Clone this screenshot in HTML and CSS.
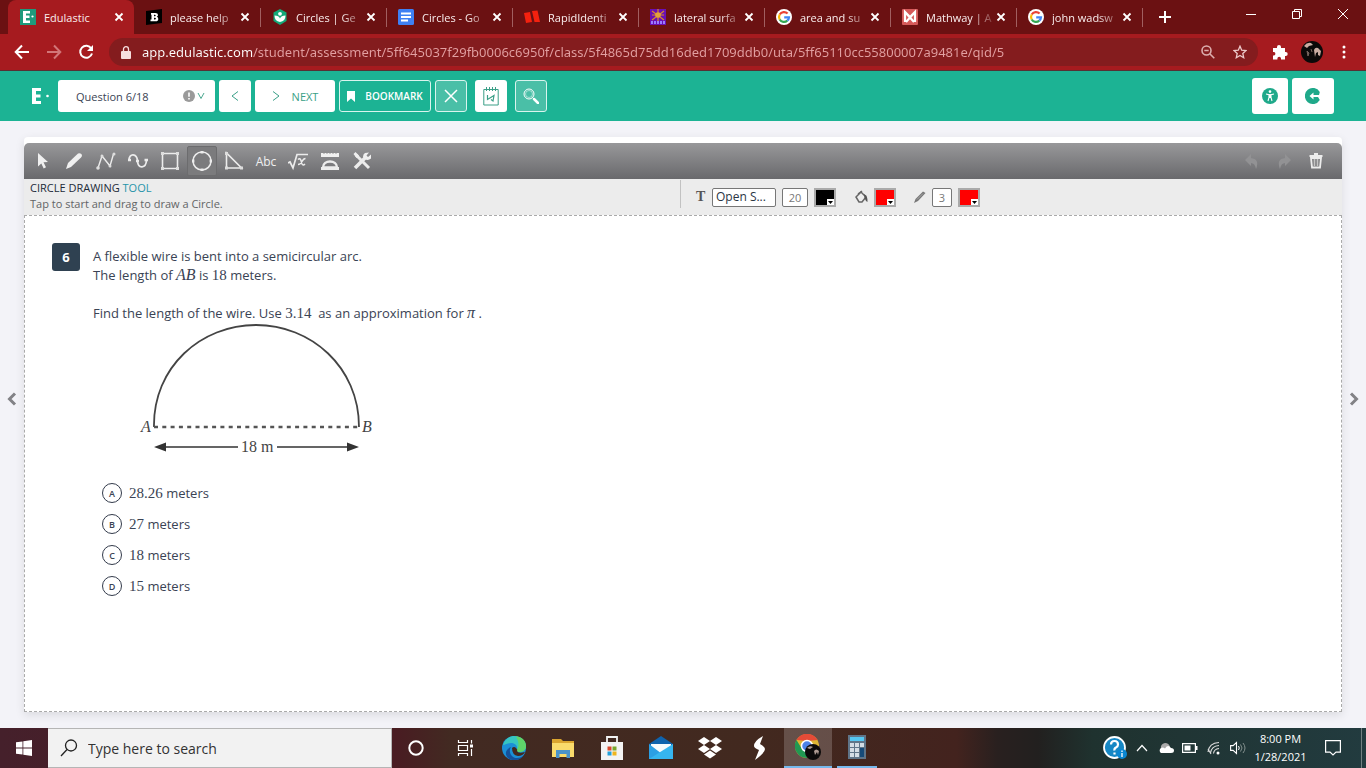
FILE: index.html
```html
<!DOCTYPE html>
<html lang="en">
<head>
<meta charset="utf-8">
<title>Edulastic</title>
<link rel="stylesheet" href="styles.css">
</head>
<body>
<div class="tabs">
  <div class="tab tab-active">
    <svg class="fav" viewBox="0 0 16 16"><rect width="16" height="16" fill="#1e9a7c"/><path d="M3 2h7v2.600H6v2h3.500v2.500H6v2.300h4V14H3z" fill="#fff"/><circle cx="12.500" cy="7.500" r="1.100" fill="#fff"/></svg>
    <a href="#" class="tab-title">Edulastic</a><button class="tab-close" aria-label="Close tab"><svg viewBox="0 0 10 10"><path d="M1.500 1.500l7 7m0-7l-7 7"/></svg></button>
  </div>
  <div class="tab">
    <svg class="fav" viewBox="0 0 16 16"><path d="M0 2L16 0v14L0 16z" fill="#000"/><path d="M5 4h4.500q2.500 0 2.500 2 0 1.300-1.200 1.800 1.500.5 1.500 2.100 0 2.300-2.800 2.300H4.500V10.500h1V5.800H5zM8 5.700v1.500h.9q.8 0 .8-.7t-.8-.8zm0 3v1.800h1q.9 0 .9-.9T9 8.700z" fill="#fff"/></svg>
    <a href="#" class="tab-title">please help</a><button class="tab-close" aria-label="Close tab"><svg viewBox="0 0 10 10"><path d="M1.500 1.500l7 7m0-7l-7 7"/></svg></button>
  </div>
  <div class="tab">
    <svg class="fav" viewBox="0 0 16 16"><path d="M8 0l6.500 3.600v8.300L8 16l-6.500-4.100V3.600z" fill="#14a878"/><circle cx="8" cy="4.800" r="1.900" fill="#fff"/><path d="M2.500 6.500Q7 6.500 8 9.500q1-3 5.500-3Q13.500 12 8 13 2.500 12 2.500 6.500z" fill="#fff"/></svg>
    <a href="#" class="tab-title">Circles | Ge</a><button class="tab-close" aria-label="Close tab"><svg viewBox="0 0 10 10"><path d="M1.500 1.500l7 7m0-7l-7 7"/></svg></button>
  </div>
  <div class="tab">
    <svg class="fav" viewBox="0 0 16 16"><rect width="16" height="16" rx="1.500" fill="#3f80f3"/><path d="M3 4.500h10M3 8h10M3 11.500h7" stroke="#fff" stroke-width="1.800"/></svg>
    <a href="#" class="tab-title">Circles - Go</a><button class="tab-close" aria-label="Close tab"><svg viewBox="0 0 10 10"><path d="M1.500 1.500l7 7m0-7l-7 7"/></svg></button>
  </div>
  <div class="tab">
    <svg class="fav" viewBox="0 0 16 16"><path d="M0 4l6-1 2 10-6 1zM8 2l5.500-.5L16 13h-5.500z" fill="#f4210f"/></svg>
    <a href="#" class="tab-title">RapidIdenti</a><button class="tab-close" aria-label="Close tab"><svg viewBox="0 0 10 10"><path d="M1.500 1.500l7 7m0-7l-7 7"/></svg></button>
  </div>
  <div class="tab">
    <svg class="fav" viewBox="0 0 16 16"><rect width="16" height="16" fill="#6a10b4"/><path d="M8 0v12M2 2l12 9M14 2L2 11M2 6h12" stroke="#d98a2b" stroke-width="1.200"/><circle cx="8" cy="6" r="2.800" fill="#e3a338"/><path d="M1 13.500h14" stroke="#9a7cff" stroke-width="3" stroke-dasharray="2 1"/></svg>
    <a href="#" class="tab-title">lateral surfa</a><button class="tab-close" aria-label="Close tab"><svg viewBox="0 0 10 10"><path d="M1.500 1.500l7 7m0-7l-7 7"/></svg></button>
  </div>
  <div class="tab">
    <svg class="fav" viewBox="0 0 16 16"><circle cx="8" cy="8" r="8" fill="#fff"/><g fill="none" stroke-width="2.200"><path d="M11.600 4.600A5 5 0 0 0 3.700 5.500" stroke="#ea4335"/><path d="M3.700 5.500a5 5 0 0 0 0 5" stroke="#fbbc05"/><path d="M3.700 10.500a5 5 0 0 0 7.600 1.200" stroke="#34a853"/><path d="M11.300 11.700A5 5 0 0 0 13 8.300H8.200" stroke="#4285f4"/></g></svg>
    <a href="#" class="tab-title">area and su</a><button class="tab-close" aria-label="Close tab"><svg viewBox="0 0 10 10"><path d="M1.500 1.500l7 7m0-7l-7 7"/></svg></button>
  </div>
  <div class="tab">
    <svg class="fav" viewBox="0 0 16 16"><rect width="16" height="16" rx="1" fill="#d65a5a"/><path d="M3 13V3l5 5 5-5v10M3 3l9 10M13 3L4 13" fill="none" stroke="#fff" stroke-width="2.200"/></svg>
    <a href="#" class="tab-title">Mathway | A</a><button class="tab-close" aria-label="Close tab"><svg viewBox="0 0 10 10"><path d="M1.500 1.500l7 7m0-7l-7 7"/></svg></button>
  </div>
  <div class="tab">
    <svg class="fav" viewBox="0 0 16 16"><circle cx="8" cy="8" r="8" fill="#fff"/><g fill="none" stroke-width="2.200"><path d="M11.600 4.600A5 5 0 0 0 3.700 5.500" stroke="#ea4335"/><path d="M3.700 5.500a5 5 0 0 0 0 5" stroke="#fbbc05"/><path d="M3.700 10.500a5 5 0 0 0 7.600 1.200" stroke="#34a853"/><path d="M11.300 11.700A5 5 0 0 0 13 8.300H8.200" stroke="#4285f4"/></g></svg>
    <a href="#" class="tab-title">john wadsw</a><button class="tab-close" aria-label="Close tab"><svg viewBox="0 0 10 10"><path d="M1.500 1.500l7 7m0-7l-7 7"/></svg></button>
  </div>
  <button class="new-tab" aria-label="New tab"><svg width="12" height="12" viewBox="0 0 12 12"><path d="M6 0v12M0 6h12" stroke="#fff" stroke-width="2"/></svg></button>
  <div class="win-controls">
    <button aria-label="Minimize"><svg width="10" height="10" viewBox="0 0 10 10"><path d="M0 5.500h10"/></svg></button>
    <button aria-label="Restore"><svg width="10" height="10" viewBox="0 0 10 10"><path d="M.5 2.500h7v7h-7zM2.500 2.500v-2h7v7h-2"/></svg></button>
    <button aria-label="Close"><svg width="10" height="10" viewBox="0 0 10 10"><path d="M0 0l10 10M10 0L0 10"/></svg></button>
  </div>
</div>

<div class="browser-bar">
  <button class="nav-btn" aria-label="Back"><svg width="16" height="16" viewBox="0 0 16 16"><path d="M15 8H2m6-6.500L1.700 8 8 14.500"/></svg></button>
  <button class="nav-btn nav-dim" aria-label="Forward"><svg width="16" height="16" viewBox="0 0 16 16"><path d="M1 8h13M8 1.500L14.300 8 8 14.500"/></svg></button>
  <button class="nav-btn" aria-label="Reload"><svg width="16" height="16" viewBox="0 0 16 16"><path d="M13.300 4.500A6 6 0 1 0 14 9.500"/><path d="M15 1v6H9z" fill="#fff" stroke="none"/></svg></button>
  <div class="address">
    <svg width="10" height="13" viewBox="0 0 10 13"><rect y="5" width="10" height="8" rx="1" fill="#f7dede"/><path d="M2.500 5V3.200a2.500 2.500 0 0 1 5 0V5" fill="none" stroke="#f7dede" stroke-width="1.300"/></svg>
    <input class="url" type="text" aria-label="Address" value="app.edulastic.com/student/assessment/5ff645037f29fb0006c6950f/class/5f4865d75dd16ded1709ddb0/uta/5ff65110cc55800007a9481e/qid/5">
    <button aria-label="Zoom"><svg width="14" height="14" viewBox="0 0 14 14" fill="none" stroke="#dcaeae" stroke-width="1.600"><circle cx="5.500" cy="5.500" r="4.500"/><path d="M9 9l4.300 4.300M3.300 5.500h4.400"/></svg></button>
    <button aria-label="Bookmark this tab"><svg width="14" height="14" viewBox="0 0 14 14"><path d="M7 1.200l1.700 4 4.300.4-3.200 2.900.9 4.200L7 10.500l-3.700 2.200.9-4.200L1 5.600l4.300-.4z" fill="none" stroke="#edcaca" stroke-width="1.300"/></svg></button>
  </div>
  <button class="nav-btn" aria-label="Extensions"><svg width="16" height="16" viewBox="0 0 16 16"><path d="M1 4h4V3a2 2 0 0 1 4 0v1h4v4h.7a2 2 0 0 1 0 4H13v3.500H9v-1a1.800 1.800 0 0 0-3.600 0v1H1v-4h1a1.800 1.800 0 0 0 0-3.500H1z" fill="#fff" stroke="none"/></svg></button>
  <button class="nav-btn" aria-label="Profile"><svg width="22" height="22" viewBox="0 0 22 22"><circle cx="11" cy="11" r="11" fill="#0b0909" stroke="none"/><path d="M3 5q3-4 7-3l2 2-4 1-2 2zM13 9q1-3 4-2l3 3-1 5-2-1v-3l-2 1-1 4z" fill="#c9aca2" stroke="none"/><path d="M6 10l2 2-1 3zM10 8l1 3" fill="#75635d" stroke="#75635d" stroke-width="1"/></svg></button>
  <button class="nav-btn" aria-label="Menu"><svg width="4" height="14" viewBox="0 0 4 14"><g fill="#fff" stroke="none"><circle cx="2" cy="2" r="1.500"/><circle cx="2" cy="7" r="1.500"/><circle cx="2" cy="12" r="1.500"/></g></svg></button>
</div>

<header class="app-header">
  <svg class="logo" width="18" height="18" viewBox="0 0 18 18" role="img" aria-label="Edulastic"><path d="M0 1h9v3H4v3.500h4.500v3H4V14h5v3H0z" fill="#fff"/><circle cx="15.500" cy="9" r="1.300" fill="#fff"/></svg>
  <div class="q-picker">
    <select aria-label="Question"><option>Question 6/18</option></select>
    <svg width="24" height="12" viewBox="0 0 24 12"><circle cx="6" cy="6" r="6" fill="#9a9a9a"/><path d="M6 2.500v4.200M6 8v1.600" stroke="#fff" stroke-width="1.600"/><path d="M15 3l3 5.500L21 3" fill="none" stroke="#4aa78f"/></svg>
  </div>
  <button class="hbtn" aria-label="Previous"><svg width="8" height="10" viewBox="0 0 8 10"><path d="M7 .5L1 5l6 4.500"/></svg></button>
  <button class="hbtn hbtn-next"><svg width="8" height="10" viewBox="0 0 8 10"><path d="M1 .5L7 5 1 9.500"/></svg>NEXT</button>
  <button class="hbtn hbtn-outline hbtn-mark"><svg width="8" height="11" viewBox="0 0 8 11"><path d="M0 0h8v11L4 7.500 0 11z" fill="#fff" stroke="none"/></svg>BOOKMARK</button>
  <button class="hbtn hbtn-outline hbtn-light" aria-label="Cross out"><svg width="14" height="14" viewBox="0 0 14 14"><path d="M1 1l12 12M13 1L1 13" stroke-width="1.500"/></svg></button>
  <div class="hgroup">
    <button class="hbtn" aria-label="Scratchpad"><svg width="16" height="20" viewBox="0 0 16 20"><path d="M.8 3.500h14.400v15.500H.8zM3.500 1v4M6.500 1v4M9.500 1v4M12.500 1v4"/><path d="M4.500 9v4.500L11 9.500 10 15l-2-1.500" stroke-width="1.200"/></svg></button>
    <button class="hbtn hbtn-outline hbtn-light" aria-label="Magnify"><svg width="16" height="16" viewBox="0 0 16 16"><circle cx="6" cy="6" r="5"/><circle cx="6" cy="6" r="3.500" stroke-width=".5"/><path d="M9.500 9.500l1.500 1.500" /><path d="M11 11l4 4" stroke-width="2.500" stroke-linecap="round"/></svg></button>
  </div>
  <div class="hright">
    <button class="hbtn hbtn-big" aria-label="Accessibility"><svg width="16" height="16" viewBox="0 0 16 16"><circle cx="8" cy="8" r="8" fill="#1fa98a" stroke="none"/><circle cx="8" cy="3.600" r="1.300" fill="#fff" stroke="none"/><path d="M4 6l3 .7v2.800L6 13M12 6l-3 .7v2.800l1 3.500M8 6v4" stroke="#fff" stroke-width="1.100"/></svg></button>
    <button class="hbtn hbtn-big hbtn-wide" aria-label="Exit"><svg width="16" height="16" viewBox="0 0 16 16"><path d="M14.800 4A8 8 0 1 0 14.800 12L13 9H8.500v2.500L4.500 8l4-3.500V7H14z" fill="#1fa98a" stroke="none"/></svg></button>
  </div>
</header>

<main class="stage">
  <button class="side" aria-label="Previous question"><svg width="10" height="14" viewBox="0 0 10 14"><path d="M8 1.500L2.500 7 8 12.500"/></svg></button>
  <section class="card">
    <div class="tools">
      <button aria-label="Select"><svg viewBox="0 0 20 20"><path d="M6 2l10 9-4.500.3 2.500 5-2.300 1.200-2.400-5L6 15.500z" fill="#f0f0f0" stroke="none"/></svg></button>
      <button aria-label="Pencil"><svg viewBox="0 0 20 20"><path d="M2 18l2-6L14 2.500q3-1 4 1.500 0 1.500-1 2.500L7 16z" fill="#f0f0f0" stroke="none"/></svg></button>
      <button aria-label="Broken line"><svg viewBox="0 0 20 20"><path d="M2 17L6 5l8 10 3.500-12" stroke-width="1.400"/><g fill="#ddd" stroke="none"><circle cx="2" cy="17" r="1.800"/><circle cx="6" cy="5" r="1.500"/><circle cx="14" cy="15" r="1.500"/><circle cx="18" cy="3" r="1.500"/></g></svg></button>
      <button aria-label="Curve"><svg viewBox="0 0 20 20"><path d="M1 9c0-7 8-7 8.500 1s8.500 8 9-1" stroke-width="1.700"/><path d="M0 9h3M16.500 9h3.500M8 10h3" stroke-width="2.500"/></svg></button>
      <button aria-label="Rectangle"><svg viewBox="0 0 20 20"><path d="M2.500 2.500h15v15h-15z" stroke-width="1.600"/><path d="M1 1h3v3H1zM16 1h3v3h-3zM1 16h3v3H1zM16 16h3v3h-3z" fill="#ddd" stroke="none"/></svg></button>
      <button class="tool-on" aria-label="Circle"><svg viewBox="0 0 20 20"><circle cx="10" cy="10" r="9" stroke-width="1.500"/><path d="M8.500 1.200h3M8.500 18.800h3M1.200 8.500v3M18.800 8.500v3" stroke-width="2.400"/></svg></button>
      <button aria-label="Triangle"><svg viewBox="0 0 20 20"><path d="M2.500 2v15h15z" stroke-width="1.600"/><path d="M1 1h3v3H1zM1 15.500h3v3H1zM16 15.500h3v3h-3z" fill="#ddd" stroke="none"/></svg></button>
      <button class="tool-text">Abc</button>
      <button aria-label="Formula"><svg viewBox="0 0 20 20"><path d="M0 12l2-1 3 6L9 3.500h11" stroke-width="1.700"/><path d="M10 8.500q2-2 3 1l1 3.500q1 2 3 0M17.500 7.500q-2 0-3.500 3t-4 3" stroke-width="1.500"/></svg></button>
      <button aria-label="Measure"><svg viewBox="0 0 20 20"><path d="M1 2h18v4H1z" fill="#f0f0f0" stroke="none"/><path d="M3 16.500c0-8 14-8 14 0z" stroke-width="2.400"/><path d="M1 17.500h18" stroke-width="3"/><path d="M4 2v1m3-1v1m3-1v1m3-1v1m3-1v1" stroke="#999"/></svg></button>
      <button aria-label="Tools"><svg viewBox="0 0 20 20"><path d="M4 4l13 13" stroke-width="3"/><path d="M14 6L3 17" stroke-width="3.500"/><path d="M1.500 3l2-2L7 4.500 4.500 7zM13 2l4-.5-2.500 3L16 6l3-2.500v4Q16 10 13 8l-2-2q0-3 2-4z" fill="#f0f0f0" stroke="none"/></svg></button>
      <div class="tools-right">
        <button aria-label="Undo"><svg viewBox="0 0 20 20"><path d="M9 3v4q9 1 5 11-1-6-5-6v3L3 9z" fill="#929294" stroke="none"/></svg></button>
        <button aria-label="Redo"><svg viewBox="0 0 20 20"><path d="M11 3v4Q2 8 6 18q1-6 5-6v3l6-6z" fill="#929294" stroke="none"/></svg></button>
        <button aria-label="Delete"><svg viewBox="0 0 20 20"><path d="M3.500 5h13M8 3h4" stroke-width="2"/><path d="M5 7h10l-1 9.500H6z" stroke-width="1.800"/><path d="M8.500 8v7M11.500 8v7" stroke="#c4c4c4" stroke-width="1.500"/></svg></button>
      </div>
    </div>
    <div class="options">
      <div class="tool-help"><div class="tool-name">CIRCLE DRAWING <span>TOOL</span></div><div class="tool-hint">Tap to start and drag to draw a Circle.</div></div>
      <div class="opts">
        <div class="opt"><b class="t-icon">T</b>
          <select class="font" aria-label="Font"><option>Open S...</option></select>
          <input class="size" type="text" aria-label="Font size" value="20">
          <button class="swatch black" aria-label="Text colour"><svg width="7" height="6" viewBox="0 0 7 6"><path d="M0 0h7v6H0z" fill="#fff"/><path d="M1 2h5L3.500 5z" fill="#000"/></svg></button></div>
        <div class="opt"><svg width="14" height="14" viewBox="0 0 14 14"><path d="M2 7l5-5 5 5-4 5H5z" fill="#eee" stroke="#666" stroke-width="1.500"/><path d="M4 4l4-3" stroke="#666" stroke-width="1.500"/><path d="M10 4q4 2 3.500 8-2-1-3-4z" fill="#555"/></svg>
          <button class="swatch red" aria-label="Fill colour"><svg width="7" height="6" viewBox="0 0 7 6"><path d="M0 0h7v6H0z" fill="#fff"/><path d="M1 2h5L3.500 5z" fill="#000"/></svg></button></div>
        <div class="opt"><svg width="12" height="12" viewBox="0 0 12 12"><path d="M0 12l1.500-4L9 .5 11.500 2 4 10z" fill="#777"/><path d="M3 8.500L9 2.500" stroke="#aaa"/></svg>
          <input class="size size-small" type="text" aria-label="Line width" value="3">
          <button class="swatch red" aria-label="Line colour"><svg width="7" height="6" viewBox="0 0 7 6"><path d="M0 0h7v6H0z" fill="#fff"/><path d="M1 2h5L3.500 5z" fill="#000"/></svg></button></div>
      </div>
    </div>
    <div class="canvas">
      <div class="q-num">6</div>
      <div class="question">
        <p>A flexible wire is bent into a semicircular arc.</p>
        <p>The length of <i class="math">AB</i> is <span class="math">18</span> meters.</p>
        <p class="ask">Find the length of the wire. Use <span class="math">3.14</span>&nbsp; as an approximation for <i class="math">π</i> .</p>
        <svg class="figure" width="290" height="136" viewBox="0 0 290 136">
          <path d="M61 104C60 44 108 2 163 2s103 42 103 102" fill="none" stroke="#444" stroke-width="1.800"/>
          <path d="M61 104h204" stroke="#555" stroke-width="2.400" stroke-dasharray="4 4.300"/>
          <path d="M68 124h77M184 124h75" stroke="#333" stroke-width="1.500"/>
          <path d="M61 124l12-4.500v9zM266 124l-12-4.500v9z" fill="#333"/>
          <g class="fig-text"><text x="48" y="109" font-style="italic">A</text><text x="269" y="109" font-style="italic">B</text><text x="148" y="129">18 m</text></g>
        </svg>
        <div class="answers">
          <label><span class="choice"><input type="radio" name="ans"><span>A</span></span><span><span class="math">28.26</span> meters</span></label>
          <label><span class="choice"><input type="radio" name="ans"><span>B</span></span><span><span class="math">27</span> meters</span></label>
          <label><span class="choice"><input type="radio" name="ans"><span>C</span></span><span><span class="math">18</span> meters</span></label>
          <label><span class="choice"><input type="radio" name="ans"><span>D</span></span><span><span class="math">15</span> meters</span></label>
        </div>
      </div>
    </div>
  </section>
  <button class="side" aria-label="Next question"><svg width="10" height="14" viewBox="0 0 10 14"><path d="M2 1.500L7.500 7 2 12.500"/></svg></button>
</main>

<footer class="taskbar">
  <button class="app" aria-label="Start"><svg width="16" height="16" viewBox="0 0 16 16"><path d="M0 2.300L6.500 1.400v6.200H0zM7.300 1.200L16 0v7.600H7.300zM0 8.400h6.500v6.200L0 13.700zM7.300 8.400H16V16l-8.700-1.200z" fill="#fff"/></svg></button>
  <label class="search"><svg width="18" height="18" viewBox="0 0 18 18"><circle cx="11" cy="6.500" r="5.500" fill="none" stroke="#222" stroke-width="1.300"/><path d="M7 10.500L1 17" stroke="#222" stroke-width="1.300"/></svg><input type="search" placeholder="Type here to search" aria-label="Search"></label>
  <div class="apps">
    <button class="app" aria-label="Cortana"><svg width="16" height="16" viewBox="0 0 16 16"><circle cx="8" cy="8" r="6.700" fill="none" stroke="#fff" stroke-width="2"/></svg></button>
    <button class="app" aria-label="Task View"><svg width="16" height="16" viewBox="0 0 16 16"><path d="M1.500 5.500h9v5h-9zM1.500 0v2.500h9V0M1.500 16v-2.500h9V16M14.500 0v3.500M14.500 9v7" fill="none" stroke="#fff" stroke-width="1.200"/><path d="M13 4.500h3v3h-3z" fill="#fff"/></svg></button>
    <button class="app" aria-label="Edge"><svg width="24" height="24" viewBox="0 0 24 24"><circle cx="12" cy="12" r="12" fill="#1b8fd6"/><path d="M1 9C3 2 9 0 12 0c8 0 12 6 12 10 0 5-4 6-7 6-2 0-3-1-2-2.500C16 9 12 7 9 7S3 9 1 9z" fill="#36c5c0"/><path d="M14 .3C21 1 24 6 24 10c0 5-4 6-7 6-2 0-3-1-2-2.500C18 9 16 5 14 .3z" fill="#5fd36a"/><path d="M9 11c-3 4 0 11 6 11 3 0 5-1 7-3-4 6-11 6-15 4-4-3-5-9 2-12z" fill="#14519b"/><path d="M10 12q2-2 4 0 2 2 1 3 1 3 8 1-2 4-7 4-6-1-6-8z" fill="#42291f"/></svg></button>
    <button class="app" aria-label="File Explorer"><svg width="22" height="20" viewBox="0 0 22 20"><path d="M0 1h9l2 2h11v16H0z" fill="#dba52f"/><path d="M0 5h22v14H0z" fill="#fadb6c"/><path d="M4 12h14v8h-3.500v-4h-7v4H4z" fill="#4a93ca"/></svg></button>
    <button class="app" aria-label="Microsoft Store"><svg width="24" height="24" viewBox="0 0 24 24"><path d="M7 7V1h10v6" fill="none" stroke="#f3f3f3" stroke-width="1.800"/><path d="M1 6h22v18H1z" fill="#f3f3f3"/><path d="M7.500 10.500h4v4h-4z" fill="#d9472b"/><path d="M12.500 10.500h4v4h-4z" fill="#78a82c"/><path d="M7.500 15.500h4v4h-4z" fill="#22a0da"/><path d="M12.500 15.500h4v4h-4z" fill="#eeb51d"/></svg></button>
    <button class="app" aria-label="Mail"><svg width="24" height="24" viewBox="0 0 24 24"><path d="M0 8l12-8 12 8v15H0z" fill="#0f63ad"/><path d="M2 8h20v10H2z" fill="#f6fafc"/><path d="M0 8l13 10L24 8v15H0z" fill="#2b9fe4"/><path d="M0 23L24 8v15z" fill="#36b5ef"/></svg></button>
    <button class="app" aria-label="Dropbox"><svg width="24" height="22" viewBox="0 0 24 22"><path d="M6 0l6 4-6 4-6-4zM18 0l6 4-6 4-6-4zM6 8l6 4-6 4-6-4zM18 8l6 4-6 4-6-4zM12 13.500l6 4-6 4-6-4z" fill="#fff"/></svg></button>
    <button class="app" aria-label="Strokes"><svg width="14" height="24" viewBox="0 0 14 24"><path d="M11 0Q2 5 2 10q0 2 5 4l-4 10q10-7 10-11 0-2-5-5z" fill="#fff"/></svg></button>
    <button class="app app-on" aria-label="Chrome"><svg width="26" height="26" viewBox="0 0 26 26"><circle cx="12" cy="12" r="12" fill="#ddb534"/><path d="M1.500 6A12 12 0 0 1 22.500 6L12 7z" fill="#e54b37"/><path d="M1.500 6A12 12 0 0 0 12 24l4-7-9-2z" fill="#219852"/><circle cx="12" cy="12" r="5.500" fill="#4c82e8" stroke="#fff" stroke-width="1.500"/><circle cx="18" cy="18" r="8" fill="#0c0a0a"/><path d="M12 14q3-3 6-1l-3 2zM19 17q2-3 5 0l-1 4-1-3-2 3z" fill="#ae9a92"/></svg></button>
    <button class="app app-open" aria-label="Calculator"><svg width="18" height="24" viewBox="0 0 18 24"><path d="M0 0h18v24H0z" fill="#5f7488"/><path d="M2 2h14v4H2z" fill="#55c7f2"/><path d="M2 8h4v4H2zM7 8h4v4H7zM12 8h4v4h-4zM2 13h4v4H2zM7 13h4v4H7zM2 18h4v4H2zM7 18h4v4H7z" fill="#d3dce4"/><path d="M12 13h4v9h-4z" fill="#164a78"/></svg></button>
  </div>
  <div class="tray">
    <button aria-label="Help"><svg width="24" height="24" viewBox="0 0 24 24"><circle cx="11.500" cy="11.500" r="10.500" fill="#1687c4" stroke="#fff" stroke-width="1.800"/><path d="M8 8.500q0-3.500 3.500-3.500T15 8.500q0 2-2 3t-1.500 3M11.500 16.500v2" fill="none" stroke="#fff" stroke-width="2.200"/><circle cx="19" cy="18" r="5" fill="#0a87d2"/><path d="M19 17v4M19 14.500v1.500" stroke="#fff" stroke-width="1.300"/></svg></button>
    <button aria-label="Show hidden icons"><svg width="12" height="8" viewBox="0 0 12 8"><path d="M1 7l5-5.500L11 7" fill="none" stroke="#fff" stroke-width="1.200"/></svg></button>
    <button aria-label="OneDrive"><svg width="16" height="12" viewBox="0 0 16 12"><path d="M3 7q-1-5 4-6 4 0 5 4l-4 3z" fill="#aaa"/><path d="M3 11a3 3 0 0 1 0-5q2-1 4 .5Q10 2 13 6q3 0 3 2.500T13 11z" fill="#fff"/></svg></button>
    <button aria-label="Battery"><svg width="16" height="10" viewBox="0 0 16 10"><path d="M.6.600h12.800v8.800H.6z" fill="none" stroke="#fff" stroke-width="1.200"/><path d="M2.500 2.500h6v5h-6zM14 3h1.500v4H14z" fill="#fff"/></svg></button>
    <button aria-label="Wi-Fi"><svg width="14" height="14" viewBox="0 0 14 14"><path d="M1 11Q2 2 12 1.500M3.500 12Q4.500 5 12 4.500M6.500 12.500Q7 8 12 7.500M1 8l3 5" fill="none" stroke="#ddd" stroke-width="1.100"/><circle cx="11" cy="12" r="1.500" fill="#fff"/></svg></button>
    <button aria-label="Volume"><svg width="16" height="14" viewBox="0 0 16 14"><path d="M.6 4.600h2.500L6.500 1.500v11L3.100 9.400H.6z" fill="none" stroke="#fff" stroke-width="1.100"/><path d="M8.500 5q1.500 2 0 4" fill="none" stroke="#fff"/><path d="M10.500 3.500q3 3.500 0 7M13 2q4 5 0 10" fill="none" stroke="#84918f"/></svg></button>
    <button class="clock"><span>8:00 PM</span><span>1/28/2021</span></button>
    <button class="notes" aria-label="Notifications"><svg width="16" height="16" viewBox="0 0 16 16"><path d="M.6.600h14.800v11.500H11L8 15l-3-2.900H.6z" fill="none" stroke="#fff" stroke-width="1.200"/></svg></button>
  </div>
</footer>
</body>
</html>
```

FILE: styles.css
```css
* { box-sizing: border-box; }
body {
  margin: 0;
  min-height: 100vh;
  display: flex;
  flex-direction: column;
  background: #f3f3f8;
  color: #3a4354;
  font: 13px/19px "Open Sans", "Noto Sans", sans-serif;
}
button, input, select { font: inherit; color: inherit; margin: 0; padding: 0; border: 0; background: none; border-radius: 0; }
button { display: flex; align-items: center; justify-content: center; }
svg { flex: none; display: block; }
p { margin: 0; }

/* Browser tabs */
.tabs { display: flex; height: 34px; padding-left: 8px; background: #6b1112; color: #f9eded; font-size: 11px; }
.tab { display: flex; align-items: center; width: 126px; padding-left: 12px; position: relative; }
.tab-active { background: #a61b1f; border-radius: 8px 8px 0 0; }
.tab:nth-child(n+3)::before, .new-tab::before {
  content: ""; position: absolute; left: 0; top: 8px; width: 1px; height: 19px; background: #a15f60;
}
.fav { width: 16px; height: 16px; }
.tab-title {
  margin-left: 8px; width: 67px; white-space: nowrap; color: inherit; text-decoration: none;
  -webkit-mask-image: linear-gradient(to right, #000 46px, #0003 66px);
  mask-image: linear-gradient(to right, #000 46px, #0003 66px);
}
.tab-active .tab-title { -webkit-mask-image: none; mask-image: none; }
.tab-close { width: 16px; height: 16px; }
.tab-close svg { width: 10px; height: 10px; stroke: #fff; stroke-width: 1.8; }
.new-tab { position: relative; width: 46px; }
.win-controls { display: flex; margin-left: auto; height: 28px; }
.win-controls button { width: 46px; }
.win-controls svg { stroke: #fff; fill: none; }

/* Address row */
.browser-bar { display: flex; align-items: center; height: 37px; padding: 0 6px; background: #a61b1f; border-bottom: 1px solid #573034; }
.nav-btn { width: 32px; height: 32px; }
.nav-btn svg { fill: none; stroke: #fff; stroke-width: 2; }
.nav-dim svg { stroke: #d27678; }
.address { flex: 1; display: flex; align-items: center; height: 28px; margin: 0 6px 0 7px; padding: 0 2px 0 12px; border-radius: 14px; background: #841c1e; }
.url {
  flex: 1; min-width: 0; margin-left: 11px; height: 24px; font-family: "Noto Sans", sans-serif; outline: 0;
  color: transparent;
  background: linear-gradient(to right, #fff 111px, #e2a0a2 111px);
  -webkit-background-clip: text;
  background-clip: text;
}
.address button { width: 32px; height: 28px; }

/* Assessment header */
.app-header { display: flex; align-items: center; gap: 4px; height: 50px; padding: 0 32px; background: #1cb394; }
.logo { margin-right: 4px; }
.q-picker { position: relative; width: 157px; }
.q-picker select { appearance: none; width: 100%; height: 32px; padding-left: 18px; border-radius: 3px; background: #fff; font-size: 11px; }
.q-picker svg { position: absolute; right: 8px; top: 10px; pointer-events: none; }
.hbtn { width: 32px; height: 32px; border-radius: 3px; background: #fff; color: #3a9f87; font-size: 12px; }
.hbtn svg { fill: none; stroke: #3a9f87; }
.hbtn-next { width: 80px; gap: 12px; font-size: 11px; }
.hbtn-outline { border: 1px solid #d9f4ee; background: none; color: #fff; }
.hbtn-outline svg { stroke: #fff; }
.hbtn-light { background: #4abfa7; }
.hbtn-mark { width: 92px; gap: 10px; font-size: 10px; font-weight: 600; }
.hgroup { display: flex; gap: 8px; margin-left: 4px; }
.hright { display: flex; gap: 4px; margin-left: auto; }
.hbtn-big { width: 36px; height: 36px; }
.hbtn-wide { width: 42px; }

/* Work area */
.stage { flex: 1; display: flex; padding: 16px 0; }
.side { width: 24px; padding-bottom: 52px; }
.side svg { fill: none; stroke: #828286; stroke-width: 3; }
.card { flex: 1; min-width: 0; display: flex; flex-direction: column; padding-top: 6px; background: #fff; border-radius: 4px 4px 0 0; box-shadow: 0 3px 10px #0000001a; }
.tools { display: flex; align-items: center; gap: 2px; height: 36px; padding: 0 11px 0 3px; border-radius: 5px 5px 0 0; background: linear-gradient(#98989a, #69696c); }
.tools button { width: 30px; height: 30px; color: #f0f0f0; }
.tools svg { width: 20px; height: 20px; fill: none; stroke: #ececec; }
.tools .tool-on { background: #7b7b7d; border: 1px solid #6c6c6e; border-radius: 2px; }
.tools .tool-text { font-size: 12px; }
.tools-right { display: flex; gap: 2px; margin-left: auto; }
.options { display: flex; height: 36px; background: #ececec; }
.tool-help { flex: 1; padding: 1px 6px; font-size: 11px; line-height: 16px; }
.tool-name { color: #222b38; }
.tool-name span { color: #2794aa; }
.tool-hint { color: #626466; }
.opts { display: flex; align-items: center; gap: 18px; width: 662px; height: 28px; margin-top: 1px; padding: 6px 0 0 15px; border-left: 1px solid #c2c2c2; }
.opt { display: flex; align-items: center; gap: 6px; }
.t-icon { width: 10px; font: bold 14px "Liberation Serif", serif; color: #555; }
.font, .size { height: 19px; background: #fff; border: 1px solid #777; border-radius: 2px; }
.font { appearance: none; width: 64px; padding-left: 3px; font-size: 12px; line-height: 16px; color: #2a3544; }
.size { width: 26px; text-align: center; font-size: 11px; color: #777; }
.size-small { width: 20px; }
.swatch { align-items: flex-end; justify-content: flex-end; width: 22px; height: 19px; border: 2px solid #aaa; }
.black { background: #000; }
.red { background: #f00; }

.canvas { flex: 1; display: flex; align-items: flex-start; gap: 13px; padding: 27px; border: 1px dashed #aaa; }
.q-num { width: 28px; height: 28px; border-radius: 3px; background: #2f4151; color: #fff; font-weight: 700; line-height: 28px; text-align: center; }
.question { flex: 1; padding-top: 4px; }
.math { font-family: "Liberation Serif", serif; font-size: 15px; line-height: 1; }
i.math { font-size: 16px; }
.ask { margin-top: 19px; }
.figure { overflow: visible; }
.fig-text { font: 16px "Liberation Serif", serif; fill: #444; }
.answers { display: flex; flex-direction: column; gap: 11px; margin: 24px 0 0 9px; }
.answers label { display: flex; align-items: center; gap: 7px; height: 20px; }
.choice { display: grid; place-items: center; width: 20px; height: 20px; font-size: 9px; font-weight: 600; }
.choice > * { grid-area: 1 / 1; }
.choice input { appearance: none; width: 20px; height: 20px; border: 1px solid #333b4b; border-radius: 50%; }

/* Taskbar */
.taskbar {
  display: flex; height: 40px; color: #fff;
  background: linear-gradient(to right, #45202b 0, #491c22 29%, #422a22 33%, #42291f 55%, #43231e 70%, #29201f 73%, #22201f 76%, #1f322f 80%, #223b3f 100%);
}
.app { width: 48px; height: 40px; }
.search { display: flex; align-items: center; gap: 10px; width: 344px; padding: 0 12px; background: #f2f2f2; border: 1px solid #b5b5b5; border-left: 0; color: #333; }
.search input { flex: 1; min-width: 0; font-size: 14px; outline: 0; }
.search input::placeholder { color: #333; opacity: 1; }
.apps { display: flex; gap: 1px; }
.app-on { background: #ffffff30; border-bottom: 2px solid #76b9ed; }
.app-open { width: 40px; margin: 0 4px; border-bottom: 2px solid #76b9ed; }
.tray { display: flex; margin-left: auto; margin-right: 4px; border-right: 1px solid #718182; }
.tray button { width: 24px; }
.tray button:first-child { width: 30px; }
.tray .clock { flex-direction: column; width: 61px; font-size: 11px; line-height: 18px; }
.tray .notes { width: 44px; margin-right: 6px; }
```
